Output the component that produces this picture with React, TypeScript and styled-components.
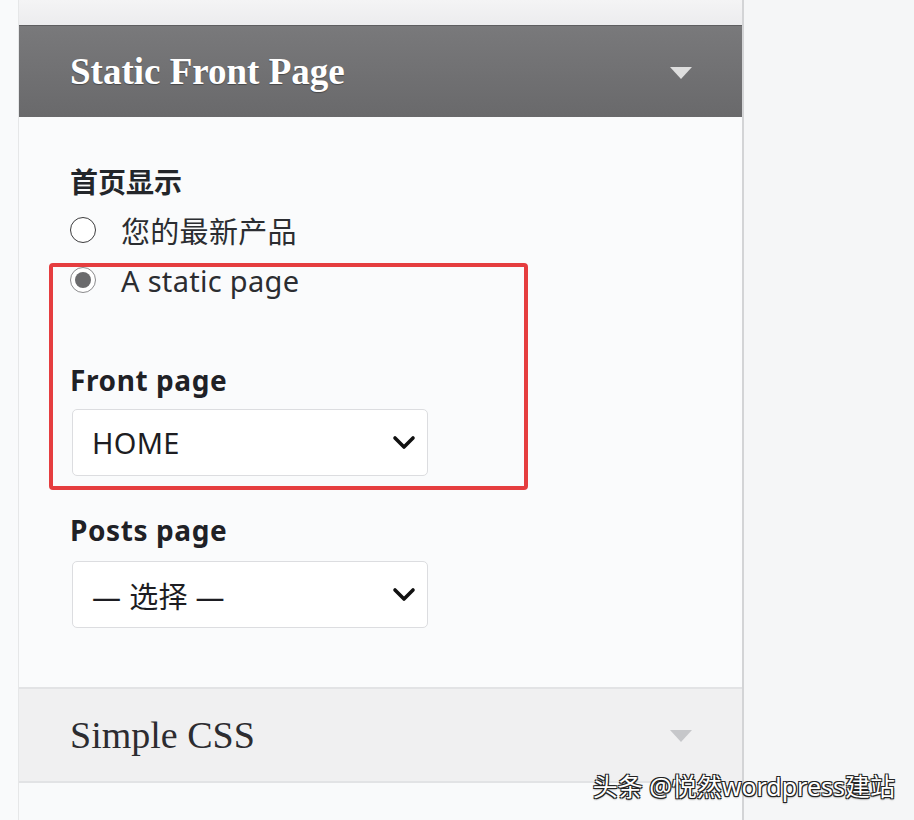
import React from 'react';
import styled, { createGlobalStyle } from 'styled-components';

const GlobalStyle = createGlobalStyle`
  html, body {
    margin: 0;
    padding: 0;
    background: #f8f9fa;
  }
  body {
    font-family: "Noto Sans", "Noto Sans CJK SC", sans-serif;
    color: #1d2327;
  }
`;

const Page = styled.div`
  position: relative;
  display: flex;
  width: 914px;
  height: 820px;
  overflow: hidden;
  background: #f8f9fa;
`;

const Gutter = styled.div`
  width: 18px;
  flex-shrink: 0;
  background: #f9fafb;
`;

const Panel = styled.div`
  width: 723px;
  flex-shrink: 0;
  display: flex;
  flex-direction: column;
  border-left: 1px solid #e6e7e8;
  border-right: 2px solid #d3d4d6;
  background: #fafbfc;
`;

const Side = styled.div`
  flex: 1;
  background: #f5f6f7;
`;

const TopStrip = styled.div`
  height: 25px;
  background: linear-gradient(#f4f4f5, #ececee);
  border-bottom: 1px solid #5e5e60;
`;

const SectionHeader = styled.div<{ $open?: boolean }>`
  display: flex;
  align-items: center;
  justify-content: space-between;
  padding: 0 50px 0 51px;
  font-family: "Liberation Serif", "DejaVu Serif", serif;
  ${p => p.$open ? `
    height: 91px;
    background: linear-gradient(#79797b, #69696b);
    color: #ffffff;
    font-size: 37px;
    font-weight: 700;
    text-shadow: 0 1px 1px rgba(0,0,0,0.35);
  ` : `
    height: 92px;
    background: #f0f0f1;
    color: #2c2c30;
    font-size: 38px;
    font-weight: 400;
    border-top: 2px solid #e2e3e5;
    border-bottom: 2px solid #e2e3e5;
  `}
`;

const Arrow = styled.div<{ $light?: boolean }>`
  width: 0;
  height: 0;
  margin-top: 2px;
  border-left: 11px solid transparent;
  border-right: 11px solid transparent;
  border-top: 12px solid ${p => p.$light ? '#c6c7ca' : '#dedede'};
`;

const Body = styled.div`
  height: 525px;
  padding: 45px 0 0 51px;
  display: flex;
  flex-direction: column;
  align-items: flex-start;
`;

const GroupLabel = styled.div`
  font-size: 28px;
  font-weight: 600;
  line-height: 40px;
  color: #23262a;
`;

const RadioRow = styled.label<{ $first?: boolean }>`
  display: flex;
  align-items: center;
  gap: 25px;
  height: 50px;
  margin-top: ${p => p.$first ? '3px' : '0'};
  font-size: 29px;
  letter-spacing: 0.3px;
  color: #2b2d31;
`;

const RadioDot = styled.span<{ $checked?: boolean }>`
  width: 24px;
  height: 24px;
  border-radius: 50%;
  border: 1.5px solid ${p => p.$checked ? '#8a8a8c' : '#3c3c3e'};
  background: #ffffff;
  display: flex;
  align-items: center;
  justify-content: center;
  &::after {
    content: '';
    display: ${p => p.$checked ? 'block' : 'none'};
    width: 16px;
    height: 16px;
    border-radius: 50%;
    background: #6b6b6d;
  }
`;

const FieldLabel = styled.div<{ $top: number }>`
  margin-top: ${p => p.$top}px;
  font-size: 28px;
  font-weight: 700;
  letter-spacing: 0.6px;
  line-height: 40px;
  color: #1f2126;
`;

const Select = styled.div<{ $top: number }>`
  box-sizing: border-box;
  margin: ${p => p.$top}px 0 0 2px;
  width: 356px;
  height: 67px;
  padding: 0 11px 0 19px;
  display: flex;
  align-items: center;
  justify-content: space-between;
  background: #ffffff;
  border: 1px solid #dcdde0;
  border-radius: 5px;
  font-size: 29px;
  letter-spacing: 0.3px;
  color: #1d1d22;
`;

const Filler = styled.div`
  flex: 1;
  background: #f9fafb;
`;

const Highlight = styled.div`
  position: absolute;
  left: 49px;
  top: 263px;
  width: 471px;
  height: 219px;
  border: 4px solid #e53d3f;
  border-radius: 4px;
  pointer-events: none;
`;

const Watermark = styled.div`
  position: absolute;
  right: 19px;
  bottom: 17px;
  font-family: "Noto Sans", "Noto Sans CJK SC", sans-serif;
  font-size: 25px;
  color: #ffffff;
  text-shadow: 1px 1px 0 #222, -1px -1px 0 #222, 1px -1px 0 #222, -1px 1px 0 #222, 0 1px 2px #000;
`;

function Chevron () :React.ReactElement {
  return (
    <svg width="24" height="16" viewBox="0 0 24 16" fill="none">
      <path d="M3 3L12 12L21 3" stroke="#111" strokeWidth="3.6" strokeLinecap="round" strokeLinejoin="round"/>
    </svg>
  );
}

export default function App () :React.ReactElement {
  return (
    <>
      <GlobalStyle />
      <Page>
        <Gutter />
        <Panel>
          <TopStrip />
          <SectionHeader $open>
            Static Front Page
            <Arrow />
          </SectionHeader>
          <Body>
            <GroupLabel>首页显示</GroupLabel>
            <RadioRow $first>
              <RadioDot />
              您的最新产品
            </RadioRow>
            <RadioRow>
              <RadioDot $checked />
              A static page
            </RadioRow>
            <FieldLabel $top={55}>Front page</FieldLabel>
            <Select $top={9}>
              HOME
              <Chevron />
            </Select>
            <FieldLabel $top={34}>Posts page</FieldLabel>
            <Select $top={11}>
              — 选择 —
              <Chevron />
            </Select>
          </Body>
          <SectionHeader>
            Simple CSS
            <Arrow $light />
          </SectionHeader>
          <Filler />
        </Panel>
        <Side />
        <Highlight />
        <Watermark>头条 @悦然wordpress建站</Watermark>
      </Page>
    </>
  );
}
